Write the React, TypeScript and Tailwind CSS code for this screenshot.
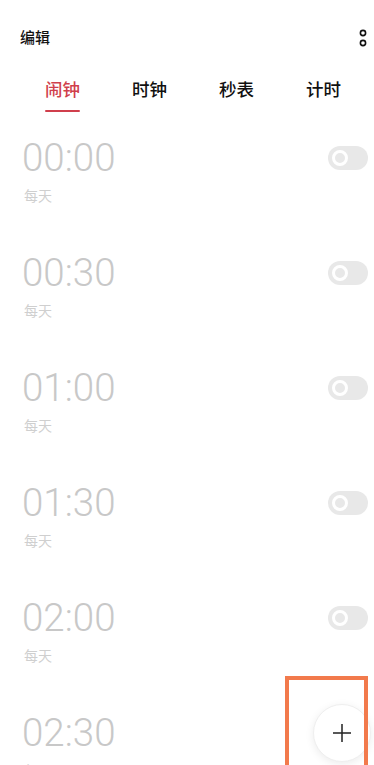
import React from "react";

const alarms = ["00:00", "00:30", "01:00", "01:30", "02:00", "02:30"];
const tabs = ["闹钟", "时钟", "秒表", "计时"];

function Toggle() {
  return (
    <div className="w-[40px] h-[24px] rounded-full bg-[#e8e8e8] flex items-center pl-[4px]">
      <div className="w-[16px] h-[16px] rounded-full border-[3px] border-white bg-[#e8e8e8]" />
    </div>
  );
}

export default function App() {
  return (
    <div
      className="relative w-[374px] h-[765px] overflow-hidden bg-white"
      style={{ fontFamily: 'Roboto, "Noto Sans CJK SC", sans-serif' }}
    >
      <div className="h-[76px] flex items-center justify-between pl-[20px] pr-[5px]">
        <span className="text-[15px] font-medium text-[#111]">编辑</span>
        <svg width="12" height="22" viewBox="0 0 12 22">
          <circle cx="6" cy="6" r="2.6" fill="none" stroke="#111" strokeWidth="1.6" />
          <circle cx="6" cy="16" r="2.6" fill="none" stroke="#111" strokeWidth="1.6" />
        </svg>
      </div>
      <div className="grid grid-cols-4 pl-[19px] pr-[7px] pt-[2px] h-[44px]">
        {tabs.map((t, i) => (
          <div key={t} className="flex flex-col items-center">
            <span
              className={`text-[17.5px] leading-[24px] font-medium ${
                i === 0 ? "text-[#d03f4c]" : "text-[#111]"
              }`}
            >
              {t}
            </span>
            {i === 0 && <div className="mt-[8px] w-[35px] h-[2px] bg-[#d03f4c] rounded-full" />}
          </div>
        ))}
      </div>
      <div className="flex flex-col">
        {alarms.map((a) => (
          <div key={a} className="h-[115px] pt-[16px] pl-[22px] pr-[6px]">
            <div className="flex items-center justify-between h-[44px]">
              <span className="text-[38.5px] leading-[44px] font-light text-[#c8c8c8]">{a}</span>
              <Toggle />
            </div>
            <div className="mt-[6px] h-[20px] pl-[2px] text-[14px] leading-[20px] text-[#cfcfcf]">每天</div>
          </div>
        ))}
      </div>
      <div className="absolute left-[313px] top-[704px] w-[58px] h-[58px] rounded-full bg-white border border-[#efefef] shadow-[0_2px_8px_rgba(0,0,0,0.08)] flex items-center justify-center">
        <svg width="20" height="20" viewBox="0 0 20 20">
          <path d="M10 1v18M1 10h18" stroke="#222" strokeWidth="1.5" />
        </svg>
      </div>
      <div className="absolute left-[285px] top-[676px] w-[83px] h-[110px] border-[4px] border-[#f27a4c]" />
    </div>
  );
}
